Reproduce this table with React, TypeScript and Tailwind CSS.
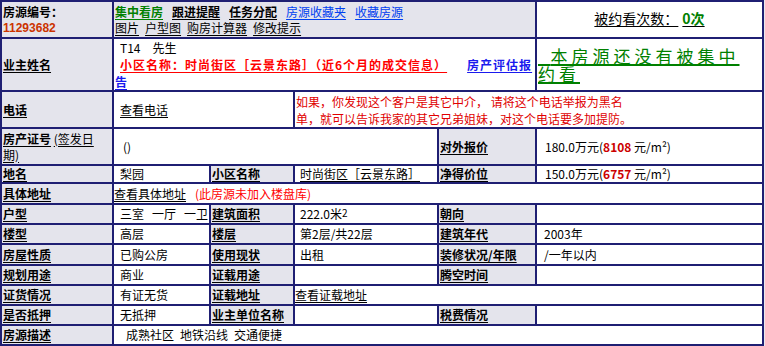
import React from "react";

type P = { children?: React.ReactNode; className?: string };

const L = ({ children, className = "" }: P) => (
  <div className={`bg-[#e4e4ec] flex items-center pl-[1px] overflow-hidden whitespace-nowrap ${className}`}>
    <span className="font-bold underline underline-offset-[2px]">{children}</span>
  </div>
);

const V = ({ children, className = "" }: P) => (
  <div className={`bg-white flex items-center overflow-hidden whitespace-nowrap ${className}`}>{children}</div>
);

export default function App() {
  return (
    <div className="w-[765px] h-[346px] bg-[#e8e8ee] font-['Noto_Sans_CJK_SC',sans-serif] text-black">
      <div className="grid w-[764px] bg-[#1f1f73] p-[2px] gap-[2px] grid-cols-[110px_95px_82px_142px_96px_225px] grid-rows-[35px_51px_35px_35px_16px_19px_18px_18px_19px_18px_18px_18px_18px] text-[12px] leading-[16px]">
        {/* Row 1 */}
        <div className="bg-[#e4e4ec] flex flex-col justify-center pl-[1px] font-bold leading-[17px]">
          <div>房源编号：</div>
          <div className="text-[#cc3300] font-['Liberation_Sans',sans-serif] text-[12px]">11293682</div>
        </div>
        <div className="col-span-4 bg-[#e4e4ec] flex flex-col justify-center pl-[1px]">
          <div className="flex gap-[9px] whitespace-nowrap">
            <span className="font-bold underline underline-offset-[2px] text-[#008000]">集中看房</span>
            <span className="font-bold underline underline-offset-[2px]">跟进提醒</span>
            <span className="font-bold underline underline-offset-[2px]">任务分配</span>
            <span className="underline underline-offset-[2px] text-[#0040f0]">房源收藏夹</span>
            <span className="underline underline-offset-[2px] text-[#0040f0]">收藏房源</span>
          </div>
          <div className="flex gap-[6px] whitespace-nowrap">
            <span className="underline underline-offset-[2px]">图片</span>
            <span className="underline underline-offset-[2px]">户型图</span>
            <span className="underline underline-offset-[2px]">购房计算器</span>
            <span className="underline underline-offset-[2px]">修改提示</span>
          </div>
        </div>
        <div className="bg-white flex items-center justify-center text-[14px] pb-[4px]">
          <span className="underline underline-offset-[2px]">
            被约看次数：<span className="ml-[4px] font-bold text-[#008000]">0次</span>
          </span>
        </div>

        {/* Row 2 */}
        <L>业主姓名</L>
        <div className="col-span-4 bg-white flex flex-col justify-center pl-[1px] leading-[17px] whitespace-nowrap overflow-hidden">
          <div className="pl-[5px]">
            <span>T14</span>
            <span className="ml-[12px]">先生</span>
          </div>
          <div className="pl-[5px] flex">
            <span className="font-bold underline underline-offset-[2px] text-[#ff0000] tracking-[1px] pr-[5px]">
              小区名称：时尚街区［云景东路］（近6个月的成交信息）
            </span>
            <span className="ml-[15px] font-bold underline underline-offset-[2px] text-[#1a1aee] tracking-[1px]">房产评估报</span>
          </div>
          <div>
            <span className="font-bold underline underline-offset-[2px] text-[#1a1aee]">告</span>
          </div>
        </div>
        <div className="bg-white flex flex-col justify-center pl-[1px] text-[17px] leading-[18px] tracking-[4px] text-[#008000] whitespace-nowrap overflow-hidden">
          <div className="h-[18px]">
            <span className="inline-block h-[18px] leading-[18px] underline decoration-[2px] underline-offset-[1px]">{"\u2002"}本房源还没有被集中</span>
          </div>
          <div className="h-[18px]">
            <span className="inline-block h-[18px] leading-[18px] underline decoration-[2px] underline-offset-[1px]">约看</span>
          </div>
        </div>

        {/* Row 3 */}
        <L>电话</L>
        <V className="col-span-2 pl-[6px]">
          <span className="underline underline-offset-[2px]">查看电话</span>
        </V>
        <div className="col-span-3 bg-white flex flex-col justify-center pl-[1px] leading-[17px] text-[#e00000] whitespace-nowrap">
          <div>如果，你发现这个客户是其它中介， 请将这个电话举报为黑名</div>
          <div>单，就可以告诉我家的其它兄弟姐妹，对这个电话要多加提防。</div>
        </div>

        {/* Row 4 */}
        <div className="bg-[#e4e4ec] flex flex-col justify-center pl-[1px] leading-[16px] whitespace-nowrap">
          <div>
            <span className="font-bold underline underline-offset-[2px]">房产证号</span>{" "}
            <span className="underline underline-offset-[2px]">(签发日</span>
          </div>
          <div>
            <span className="underline underline-offset-[2px]">期)</span>
          </div>
        </div>
        <V className="col-span-3 pl-[9px]">()</V>
        <L>对外报价</L>
        <V className="pl-[8px]">
          180.0万元(<span className="font-bold text-[#cc0000]">8108</span>&nbsp;元/m²)
        </V>

        {/* Row 5 */}
        <L>地名</L>
        <V className="pl-[6px]">梨园</V>
        <L>小区名称</L>
        <V className="pl-[5px]">
          <span className="underline underline-offset-[2px]">时尚街区［云景东路］</span>
        </V>
        <L>净得价位</L>
        <V className="pl-[8px]">
          150.0万元(<span className="font-bold text-[#cc0000]">6757</span>&nbsp;元/m²)
        </V>

        {/* Row 6 */}
        <L>具体地址</L>
        <V className="col-span-5 pl-[0px]">
          <span className="underline underline-offset-[2px]">查看具体地址</span>
          <span className="ml-[9px] text-[#ff0000]">(此房源未加入楼盘库)</span>
        </V>

        {/* Row 7 */}
        <L>户型</L>
        <V className="pl-[6px] gap-[8px]">
          <span>三室</span>
          <span>一厅</span>
          <span>一卫</span>
        </V>
        <L>建筑面积</L>
        <V className="pl-[5px]">
          222.0米<sup className="text-[10px] relative top-[-1px]">2</sup>
        </V>
        <L>朝向</L>
        <V />

        {/* Row 8 */}
        <L>楼型</L>
        <V className="pl-[6px]">高层</V>
        <L>楼层</L>
        <V className="pl-[5px]">第2层/共22层</V>
        <L>建筑年代</L>
        <V className="pl-[7px]">2003年</V>

        {/* Row 9 */}
        <L>房屋性质</L>
        <V className="pl-[6px]">已购公房</V>
        <L>使用现状</L>
        <V className="pl-[5px]">出租</V>
        <L>装修状况/年限</L>
        <V className="pl-[7px]">/一年以内</V>

        {/* Row 10 */}
        <L>规划用途</L>
        <V className="pl-[6px]">商业</V>
        <L>证载用途</L>
        <V />
        <L>腾空时间</L>
        <V />

        {/* Row 11 */}
        <L>证货情况</L>
        <V className="pl-[6px]">有证无货</V>
        <L>证载地址</L>
        <V className="col-span-3 pl-[0px]">
          <span className="underline underline-offset-[2px]">查看证载地址</span>
        </V>

        {/* Row 12 */}
        <L>是否抵押</L>
        <V className="pl-[6px]">无抵押</V>
        <L>业主单位名称</L>
        <V />
        <L>税费情况</L>
        <V />

        {/* Row 13 */}
        <L>房源描述</L>
        <V className="col-span-5 pl-[12px] gap-[6px]">
          <span>成熟社区</span>
          <span>地铁沿线</span>
          <span>交通便捷</span>
        </V>
      </div>
    </div>
  );
}
